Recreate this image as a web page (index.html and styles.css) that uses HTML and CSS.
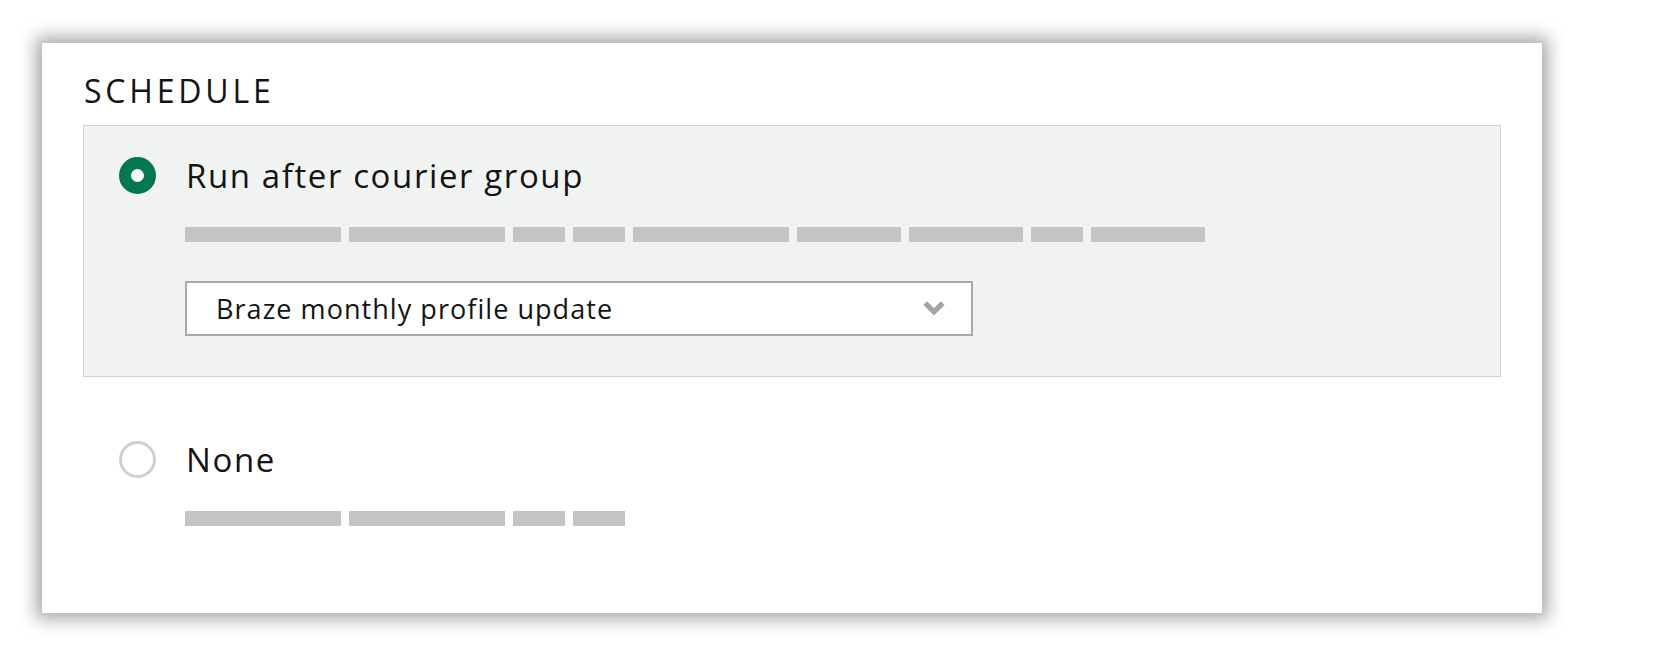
FILE: index.html
```html
<!DOCTYPE html>
<html>
<head>
<meta charset="utf-8">
<link rel="stylesheet" href="styles.css">
</head>
<body>
<div class="card">
  <h2 class="title">SCHEDULE</h2>
  <div class="option selected">
    <span class="radio checked"></span>
    <div class="content">
      <div class="label">Run after courier group</div>
      <div class="bars">
        <span class="bar w156"></span><span class="bar w156"></span><span class="bar w52"></span><span class="bar w52"></span><span class="bar w156"></span><span class="bar w104"></span><span class="bar w114"></span><span class="bar w52"></span><span class="bar w114"></span>
      </div>
      <div class="select">
        <span class="select-text">Braze monthly profile update</span>
        <svg class="chevron" width="22" height="14" viewBox="0 0 22 14"><path d="M2.2 2.2 L11 10.8 L19.8 2.2" fill="none" stroke="#a3a3a3" stroke-width="5.2"/></svg>
      </div>
    </div>
  </div>
  <div class="option">
    <span class="radio"></span>
    <div class="content">
      <div class="label">None</div>
      <div class="bars">
        <span class="bar w156"></span><span class="bar w156"></span><span class="bar w52"></span><span class="bar w52"></span>
      </div>
    </div>
  </div>
</div>
</body>
</html>
```

FILE: styles.css
```css
html, body {
  margin: 0;
  padding: 0;
  background: #ffffff;
}
body {
  font-family: "Open Sans", "Noto Sans", sans-serif;
  color: #141414;
  min-height: 656px;
  box-sizing: border-box;
  padding: 43px 0 43px 42px;
}
.card {
  width: 1500px;
  height: 570px;
  box-sizing: border-box;
  padding: 28px 41px 0 41px;
  background: #ffffff;
  box-shadow: 0 0 16px 6px rgba(0, 0, 0, 0.35);
}
.title {
  margin: 0 0 14px 1px;
  font-size: 32px;
  line-height: 40px;
  font-weight: 400;
  letter-spacing: 3.8px;
}
.option {
  display: grid;
  grid-template-columns: 37px 1fr;
  column-gap: 29px;
  padding: 31px 35px 40px 35px;
  border: 1px solid transparent;
}
.option.selected {
  background: #f1f3f2;
  border-color: #cfd6da;
}
.option + .option {
  margin-top: 32px;
}
.radio {
  width: 37px;
  height: 37px;
  box-sizing: border-box;
  border-radius: 50%;
  border: 3.5px solid #c9d1d7;
  background: #ffffff;
}
.radio.checked {
  border: 12.5px solid #047752;
  background: #ffffff;
}
.label {
  font-size: 33px;
  line-height: 37px;
  letter-spacing: 1.6px;
  margin-left: 1px;
}
.bars {
  display: flex;
  gap: 8px;
  margin-top: 33px;
}
.bar {
  height: 15px;
  background: #c4c4c4;
}
.w156 { width: 156px; }
.w104 { width: 104px; }
.w114 { width: 114px; }
.w52 { width: 52px; }
.select {
  margin-top: 39px;
  width: 788px;
  height: 55px;
  box-sizing: border-box;
  border: 2px solid #a9a9a9;
  background: #ffffff;
  display: flex;
  align-items: center;
  justify-content: space-between;
  padding: 0 26px 0 29px;
}
.select-text {
  font-size: 27px;
  letter-spacing: 1.05px;
}
.chevron {
  display: block;
  margin-top: -2px;
}
```
